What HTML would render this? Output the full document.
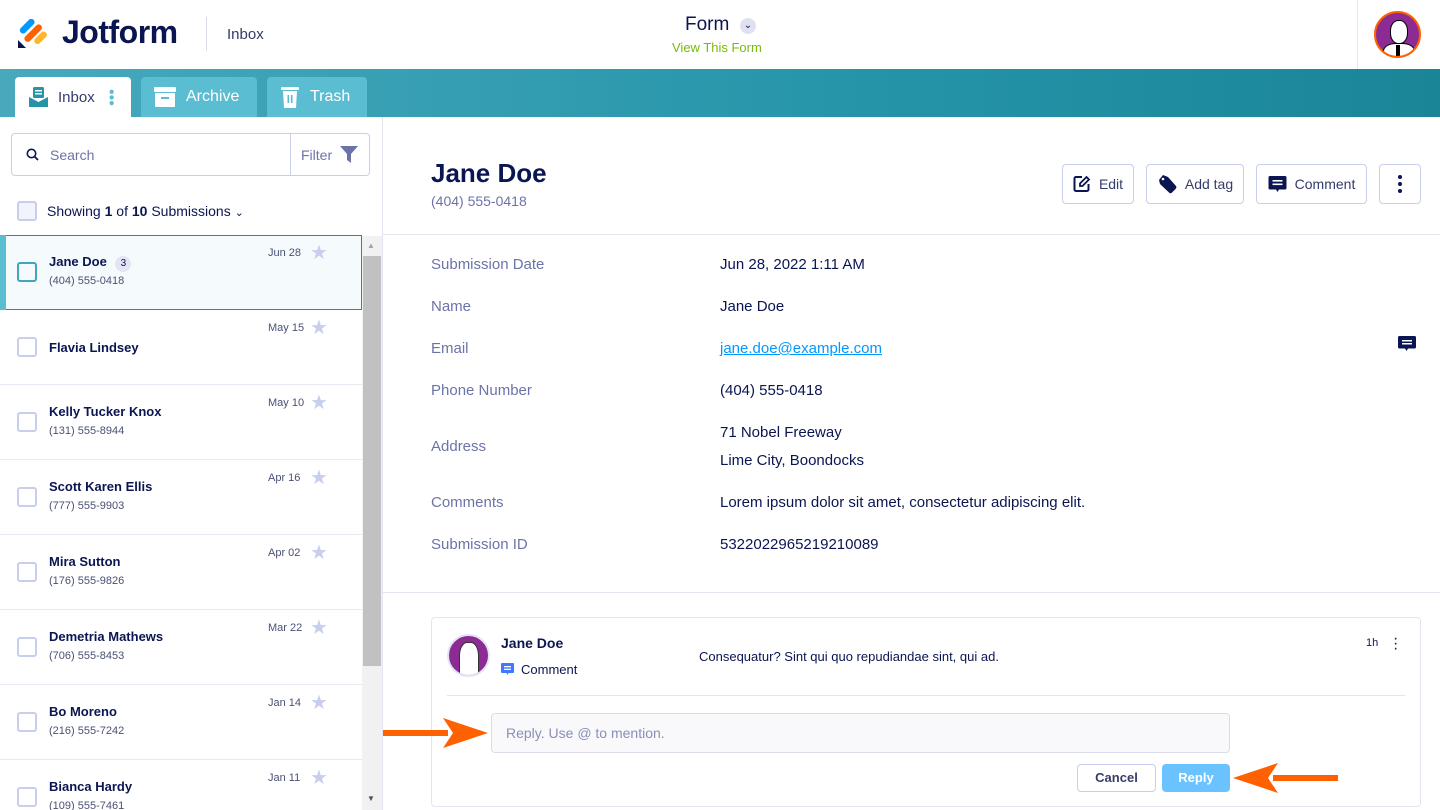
<!DOCTYPE html>
<html><head><meta charset="utf-8"><style>
*{box-sizing:border-box;margin:0;padding:0}
html,body{width:1440px;height:810px;overflow:hidden}
body{font-family:"Liberation Sans",sans-serif;background:#fff;position:relative;color:#0a1551}
.abs{position:absolute}
.hdr{left:0;top:0;width:1440px;height:69px;background:#fff}
.bar{left:0;top:69px;width:1440px;height:48px;background:linear-gradient(90deg,#48a9bd,#2594a9 60%,#1b8598)}
.tab{top:77px;height:40px;border-radius:4px 4px 0 0;background:#5bbdd2;color:#fff;font-size:16px;display:flex;align-items:center}
.row{left:0;width:362px;height:75px;border-bottom:1px solid #e6e8f2}
.cb{position:absolute;left:17px;width:20px;height:20px;border:2px solid #c8ceed;border-radius:3px}
.nm{position:absolute;left:49px;font-size:13px;font-weight:bold;color:#0a1551}
.ph{position:absolute;left:49px;font-size:11px;color:#4a5075}
.dt{position:absolute;left:268px;font-size:11px;color:#4a5075}
.st{position:absolute;left:310px;color:#c8ceed;font-size:20px;line-height:20px}
.lbl{left:431px;font-size:15px;color:#6c73a8}
.val{left:720px;font-size:15px;color:#0a1551}
.btn{top:164px;height:40px;border:1px solid #c8ceed;border-radius:4px;display:flex;align-items:center;justify-content:center;gap:8px;font-size:14px;color:#343c6a}
</style></head><body>
<div class="abs hdr"></div>
<svg class="abs" style="left:18px;top:19px" width="30" height="30" viewBox="0 0 30 30">
<rect x="6" y="-2" width="6.5" height="18" rx="3.2" fill="#0099ff" transform="rotate(45 9 7)"/>
<rect x="12" y="3" width="6.5" height="22" rx="3.2" fill="#ff6100" transform="rotate(45 15 14)"/>
<rect x="19" y="11" width="6.5" height="15" rx="3.2" fill="#ffb629" transform="rotate(45 22 19)"/>
<path d="M0 21 L0 29 L8 29 Z" fill="#0a1551"/></svg>
<div class="abs" style="left:62px;top:14px;font-size:32px;font-weight:bold;color:#0a1551;letter-spacing:-0.5px">Jotform</div>
<div class="abs" style="left:206px;top:17px;width:1px;height:34px;background:#d8dbe9"></div>
<div class="abs" style="left:227px;top:26px;font-size:15px;color:#343c6a">Inbox</div>
<div class="abs" style="left:685px;top:14px;font-size:19px;color:#0a1551">Form</div>
<div class="abs" style="left:740px;top:18px;width:16px;height:16px;border-radius:50%;background:#dfe1f0;font-size:10px;text-align:center;line-height:16px;color:#0a1551">⌄</div>
<div class="abs" style="left:672px;top:40px;font-size:13px;color:#78bb07">View This Form</div>
<div class="abs" style="left:1357px;top:0;width:1px;height:69px;background:#e3e5ef"></div>
<div class="abs" style="left:1374px;top:11px;width:47px;height:47px;border-radius:50%;background:#8b2b93;border:2px solid #ff6100;overflow:hidden">
<div style="position:absolute;left:14px;top:7px;width:18px;height:24px;background:#fff;border:1.5px solid #000;border-radius:45%"></div>
<div style="position:absolute;left:7px;top:30px;width:32px;height:20px;background:#fff;border:1.5px solid #000;border-radius:40% 40% 0 0"></div>
<div style="position:absolute;left:20px;top:32px;width:4px;height:12px;background:#000"></div></div>

<div class="abs bar"></div>
<div class="abs tab" style="left:15px;width:116px;background:#fff;color:#343c6a;font-size:15px">
<svg style="margin:0 10px 0 14px" width="19" height="21" viewBox="0 0 19 21"><rect x="4" y="0" width="11" height="11" rx="1.5" fill="#2594a9"/><rect x="6" y="3" width="7" height="1.5" fill="#fff"/><rect x="6" y="6" width="7" height="1.5" fill="#fff"/><path d="M0 10 L9.5 15 L19 10 V20 H0Z" fill="#2594a9"/></svg>Inbox<span style="margin-left:12px;color:#5bbdd2;font-size:16px;line-height:8px;writing-mode:vertical-lr">•••</span></div>
<div class="abs tab" style="left:141px;width:116px"><svg style="margin:0 10px 0 13px" width="22" height="20" viewBox="0 0 22 20"><rect x="0" y="0" width="22" height="5" rx="1" fill="#fff"/><rect x="1" y="6" width="20" height="14" rx="1" fill="#fff"/><rect x="7" y="10" width="8" height="2" fill="#5bbdd2"/></svg>Archive</div>
<div class="abs tab" style="left:267px;width:100px"><svg style="margin:0 11px 0 14px" width="18" height="22" viewBox="0 0 18 22"><rect x="0" y="1" width="18" height="3" rx="1" fill="#fff"/><path d="M2 5 H16 L15 22 H3Z" fill="#fff"/><rect x="6.5" y="9" width="1.6" height="8" fill="#5bbdd2"/><rect x="9.9" y="9" width="1.6" height="8" fill="#5bbdd2"/></svg>Trash</div>

<div class="abs" style="left:382px;top:117px;width:1px;height:693px;background:#e3e5ef"></div>
<div class="abs" style="left:11px;top:133px;width:359px;height:43px;border:1px solid #c8ceed;border-radius:4px"></div>
<svg class="abs" style="left:26px;top:148px" width="13" height="13" viewBox="0 0 13 13"><circle cx="5.5" cy="5.5" r="4.2" stroke="#0a1551" stroke-width="1.6" fill="none"/><path d="M8.5 8.5L12 12" stroke="#0a1551" stroke-width="1.8"/></svg>
<div class="abs" style="left:50px;top:147px;font-size:14px;color:#6c73a8">Search</div>
<div class="abs" style="left:290px;top:134px;width:1px;height:41px;background:#c8ceed"></div>
<div class="abs" style="left:301px;top:147px;font-size:14px;color:#6c73a8">Filter</div>
<svg class="abs" style="left:340px;top:146px" width="18" height="18" viewBox="0 0 18 18"><path d="M0 0H18L11 8V17L7 14V8Z" fill="#6c73a8"/></svg>
<div class="abs" style="left:17px;top:201px;width:20px;height:20px;border:2px solid #c8ceed;border-radius:3px;background:#f3f3fe"></div>
<div class="abs" style="left:47px;top:203px;font-size:14px;color:#0a1551">Showing <b>1</b> of <b>10</b> Submissions <span style="font-size:11px">⌄</span></div>

<div class="abs" style="left:362px;top:236px;width:20px;height:574px;background:#f1f1f1"></div>
<div class="abs" style="left:363px;top:256px;width:18px;height:410px;background:#c1c1c1"></div>
<div class="abs" style="left:367px;top:241px;font-size:8px;color:#a3a3a3">▲</div>
<div class="abs" style="left:367px;top:794px;font-size:8px;color:#505050">▼</div>

<div class="abs row" style="top:235px;background:#f5fbfc;border:1px solid #1e8ea3;height:75px"></div>
<div class="abs" style="left:0;top:235px;width:6px;height:75px;background:#5bbdd2"></div>
<div class="abs" style="top:235px;left:0;width:362px;height:75px">
<div class="cb" style="top:27px;border-color:#3ea7bc"></div><div class="nm" style="top:19px">Jane Doe <span style="display:inline-block;margin-left:5px;width:16px;height:16px;border-radius:50%;background:#e3e5f5;font-size:10px;font-weight:normal;text-align:center;line-height:16px">3</span></div><div class="ph" style="top:40px">(404) 555-0418</div><div class="dt" style="top:12px">Jun 28</div><div class="st" style="top:8px">★</div></div>

<div class="abs row" style="top:310px"><div class="cb" style="top:27px"></div><div class="nm" style="top:30px">Flavia Lindsey</div><div class="dt" style="top:12px">May 15</div><div class="st" style="top:8px">★</div></div>
<div class="abs row" style="top:385px"><div class="cb" style="top:27px"></div><div class="nm" style="top:19px">Kelly Tucker Knox</div><div class="ph" style="top:40px">(131) 555-8944</div><div class="dt" style="top:12px">May 10</div><div class="st" style="top:8px">★</div></div>
<div class="abs row" style="top:460px"><div class="cb" style="top:27px"></div><div class="nm" style="top:19px">Scott Karen Ellis</div><div class="ph" style="top:40px">(777) 555-9903</div><div class="dt" style="top:12px">Apr 16</div><div class="st" style="top:8px">★</div></div>
<div class="abs row" style="top:535px"><div class="cb" style="top:27px"></div><div class="nm" style="top:19px">Mira Sutton</div><div class="ph" style="top:40px">(176) 555-9826</div><div class="dt" style="top:12px">Apr 02</div><div class="st" style="top:8px">★</div></div>
<div class="abs row" style="top:610px"><div class="cb" style="top:27px"></div><div class="nm" style="top:19px">Demetria Mathews</div><div class="ph" style="top:40px">(706) 555-8453</div><div class="dt" style="top:12px">Mar 22</div><div class="st" style="top:8px">★</div></div>
<div class="abs row" style="top:685px"><div class="cb" style="top:27px"></div><div class="nm" style="top:19px">Bo Moreno</div><div class="ph" style="top:40px">(216) 555-7242</div><div class="dt" style="top:12px">Jan 14</div><div class="st" style="top:8px">★</div></div>
<div class="abs row" style="top:760px;height:50px;border-bottom:none"><div class="cb" style="top:27px"></div><div class="nm" style="top:19px">Bianca Hardy</div><div class="ph" style="top:40px">(109) 555-7461</div><div class="dt" style="top:12px">Jan 11</div><div class="st" style="top:8px">★</div></div>

<div class="abs" style="left:431px;top:158px;font-size:26px;font-weight:bold;color:#0a1551">Jane Doe</div>
<div class="abs" style="left:431px;top:193px;font-size:14px;color:#6c73a8">(404) 555-0418</div>
<div class="abs btn" style="left:1062px;width:72px"><svg width="18" height="18" viewBox="0 0 18 18"><path d="M9 2H3a1.5 1.5 0 0 0-1.5 1.5v11A1.5 1.5 0 0 0 3 16h11a1.5 1.5 0 0 0 1.5-1.5V9" stroke="#0a1551" stroke-width="2" fill="none"/><path d="M7 11V8.5L13.5 2 16 4.5 9.5 11Z" stroke="#0a1551" stroke-width="1.8" fill="none"/></svg>Edit</div>
<div class="abs btn" style="left:1146px;width:98px"><svg width="20" height="20" viewBox="0 0 20 20"><path d="M2 6 L6 1 L11 3 L19 12 Q20 13.5 18.5 15 L15 18.5 Q13.5 20 12 18.5 L3 10Z" fill="#0a1551"/><circle cx="6" cy="5" r="1.3" fill="#fff"/></svg>Add tag</div>
<div class="abs btn" style="left:1256px;width:111px"><svg width="19" height="19" viewBox="0 0 19 19"><path d="M2 1H17a1.5 1.5 0 0 1 1.5 1.5V13a1.5 1.5 0 0 1-1.5 1.5H11L9.5 17 8 14.5H2A1.5 1.5 0 0 1 .5 13V2.5A1.5 1.5 0 0 1 2 1Z" fill="#0a1551"/><rect x="4.5" y="5" width="10" height="1.6" fill="#fff"/><rect x="4.5" y="8.5" width="10" height="1.6" fill="#fff"/></svg>Comment</div>
<div class="abs btn" style="left:1379px;width:42px;font-size:18px;flex-direction:column;gap:3px"><i style="width:4px;height:4px;border-radius:50%;background:#0a1551"></i><i style="width:4px;height:4px;border-radius:50%;background:#0a1551"></i><i style="width:4px;height:4px;border-radius:50%;background:#0a1551"></i></div>
<div class="abs" style="left:383px;top:234px;width:1057px;height:1px;background:#e3e5ef"></div>

<div class="abs lbl" style="top:256px">Submission Date</div><div class="abs val" style="top:256px">Jun 28, 2022 1:11 AM</div>
<div class="abs lbl" style="top:298px">Name</div><div class="abs val" style="top:298px">Jane Doe</div>
<div class="abs lbl" style="top:340px">Email</div><div class="abs val" style="top:340px;color:#0099ff;text-decoration:underline">jane.doe@example.com</div>
<svg class="abs" style="left:1398px;top:336px" width="18" height="17" viewBox="0 0 18 17"><path d="M1.5 0H16.5A1.5 1.5 0 0 1 18 1.5V11A1.5 1.5 0 0 1 16.5 12.5H10L8.5 15 7 12.5H1.5A1.5 1.5 0 0 1 0 11V1.5A1.5 1.5 0 0 1 1.5 0Z" fill="#0a1551"/><rect x="4" y="4" width="10" height="1.5" fill="#fff"/><rect x="4" y="7" width="10" height="1.5" fill="#fff"/></svg>
<div class="abs lbl" style="top:382px">Phone Number</div><div class="abs val" style="top:382px">(404) 555-0418</div>
<div class="abs lbl" style="top:438px">Address</div><div class="abs val" style="top:424px">71 Nobel Freeway</div><div class="abs val" style="top:452px">Lime City, Boondocks</div>
<div class="abs lbl" style="top:494px">Comments</div><div class="abs val" style="top:494px">Lorem ipsum dolor sit amet, consectetur adipiscing elit.</div>
<div class="abs lbl" style="top:536px">Submission ID</div><div class="abs val" style="top:536px">5322022965219210089</div>
<div class="abs" style="left:383px;top:592px;width:1057px;height:1px;background:#e3e5ef"></div>

<div class="abs" style="left:431px;top:617px;width:990px;height:190px;border:1px solid #e3e5ef;border-radius:4px"></div>
<div class="abs" style="left:447px;top:634px;width:43px;height:43px;border-radius:50%;background:#8b2b93;border:2px solid #e3e5f5;overflow:hidden"><div style="position:absolute;left:10px;top:6px;width:20px;height:34px;background:#fff;border:1px solid #333;border-radius:40% 40% 10% 10%"></div></div>
<div class="abs" style="left:501px;top:635px;font-size:14px;font-weight:bold;color:#0a1551">Jane Doe</div>
<svg class="abs" style="left:501px;top:663px" width="13" height="13" viewBox="0 0 13 13"><path d="M1 0H12A1 1 0 0 1 13 1V9A1 1 0 0 1 12 10H7.5L6.5 12 5.5 10H1A1 1 0 0 1 0 9V1A1 1 0 0 1 1 0Z" fill="#4277ff"/><rect x="3" y="3" width="7" height="1.3" fill="#fff"/><rect x="3" y="5.7" width="7" height="1.3" fill="#fff"/></svg>
<div class="abs" style="left:521px;top:662px;font-size:13px;color:#0a1551">Comment</div>
<div class="abs" style="left:699px;top:649px;font-size:13px;color:#0a1551">Consequatur? Sint qui quo repudiandae sint, qui ad.</div>
<div class="abs" style="left:1366px;top:637px;font-size:11px;color:#0a1551">1h</div>
<div class="abs" style="left:1393px;top:636px;font-size:16px;line-height:5px;color:#0a1551;width:5px">·<br>·<br>·</div>
<div class="abs" style="left:447px;top:695px;width:958px;height:1px;background:#e3e5ef"></div>
<div class="abs" style="left:491px;top:713px;width:739px;height:40px;border:1px solid #dadcea;border-radius:4px;background:#f9f9fc"></div>
<div class="abs" style="left:506px;top:725px;font-size:14px;color:#8a8fb5">Reply. Use @ to mention.</div>
<div class="abs" style="left:1077px;top:764px;width:79px;height:28px;border:1px solid #c8ceed;border-radius:4px;font-size:13px;font-weight:bold;color:#343c6a;text-align:center;line-height:26px">Cancel</div>
<div class="abs" style="left:1162px;top:764px;width:68px;height:28px;border-radius:4px;background:#6ac3ff;font-size:13px;font-weight:bold;color:#fff;text-align:center;line-height:28px">Reply</div>
<svg class="abs" style="left:383px;top:716px" width="105" height="34" viewBox="0 0 105 34"><rect x="0" y="14" width="65" height="6" fill="#ff6100"/><path d="M60 2 L105 17 L60 32 L70 17Z" fill="#ff6100"/></svg>
<svg class="abs" style="left:1233px;top:762px" width="105" height="34" viewBox="0 0 105 34"><rect x="40" y="13" width="65" height="6" fill="#ff6100"/><path d="M45 1 L0 16 L45 31 L35 16Z" fill="#ff6100"/></svg>
</body></html>
